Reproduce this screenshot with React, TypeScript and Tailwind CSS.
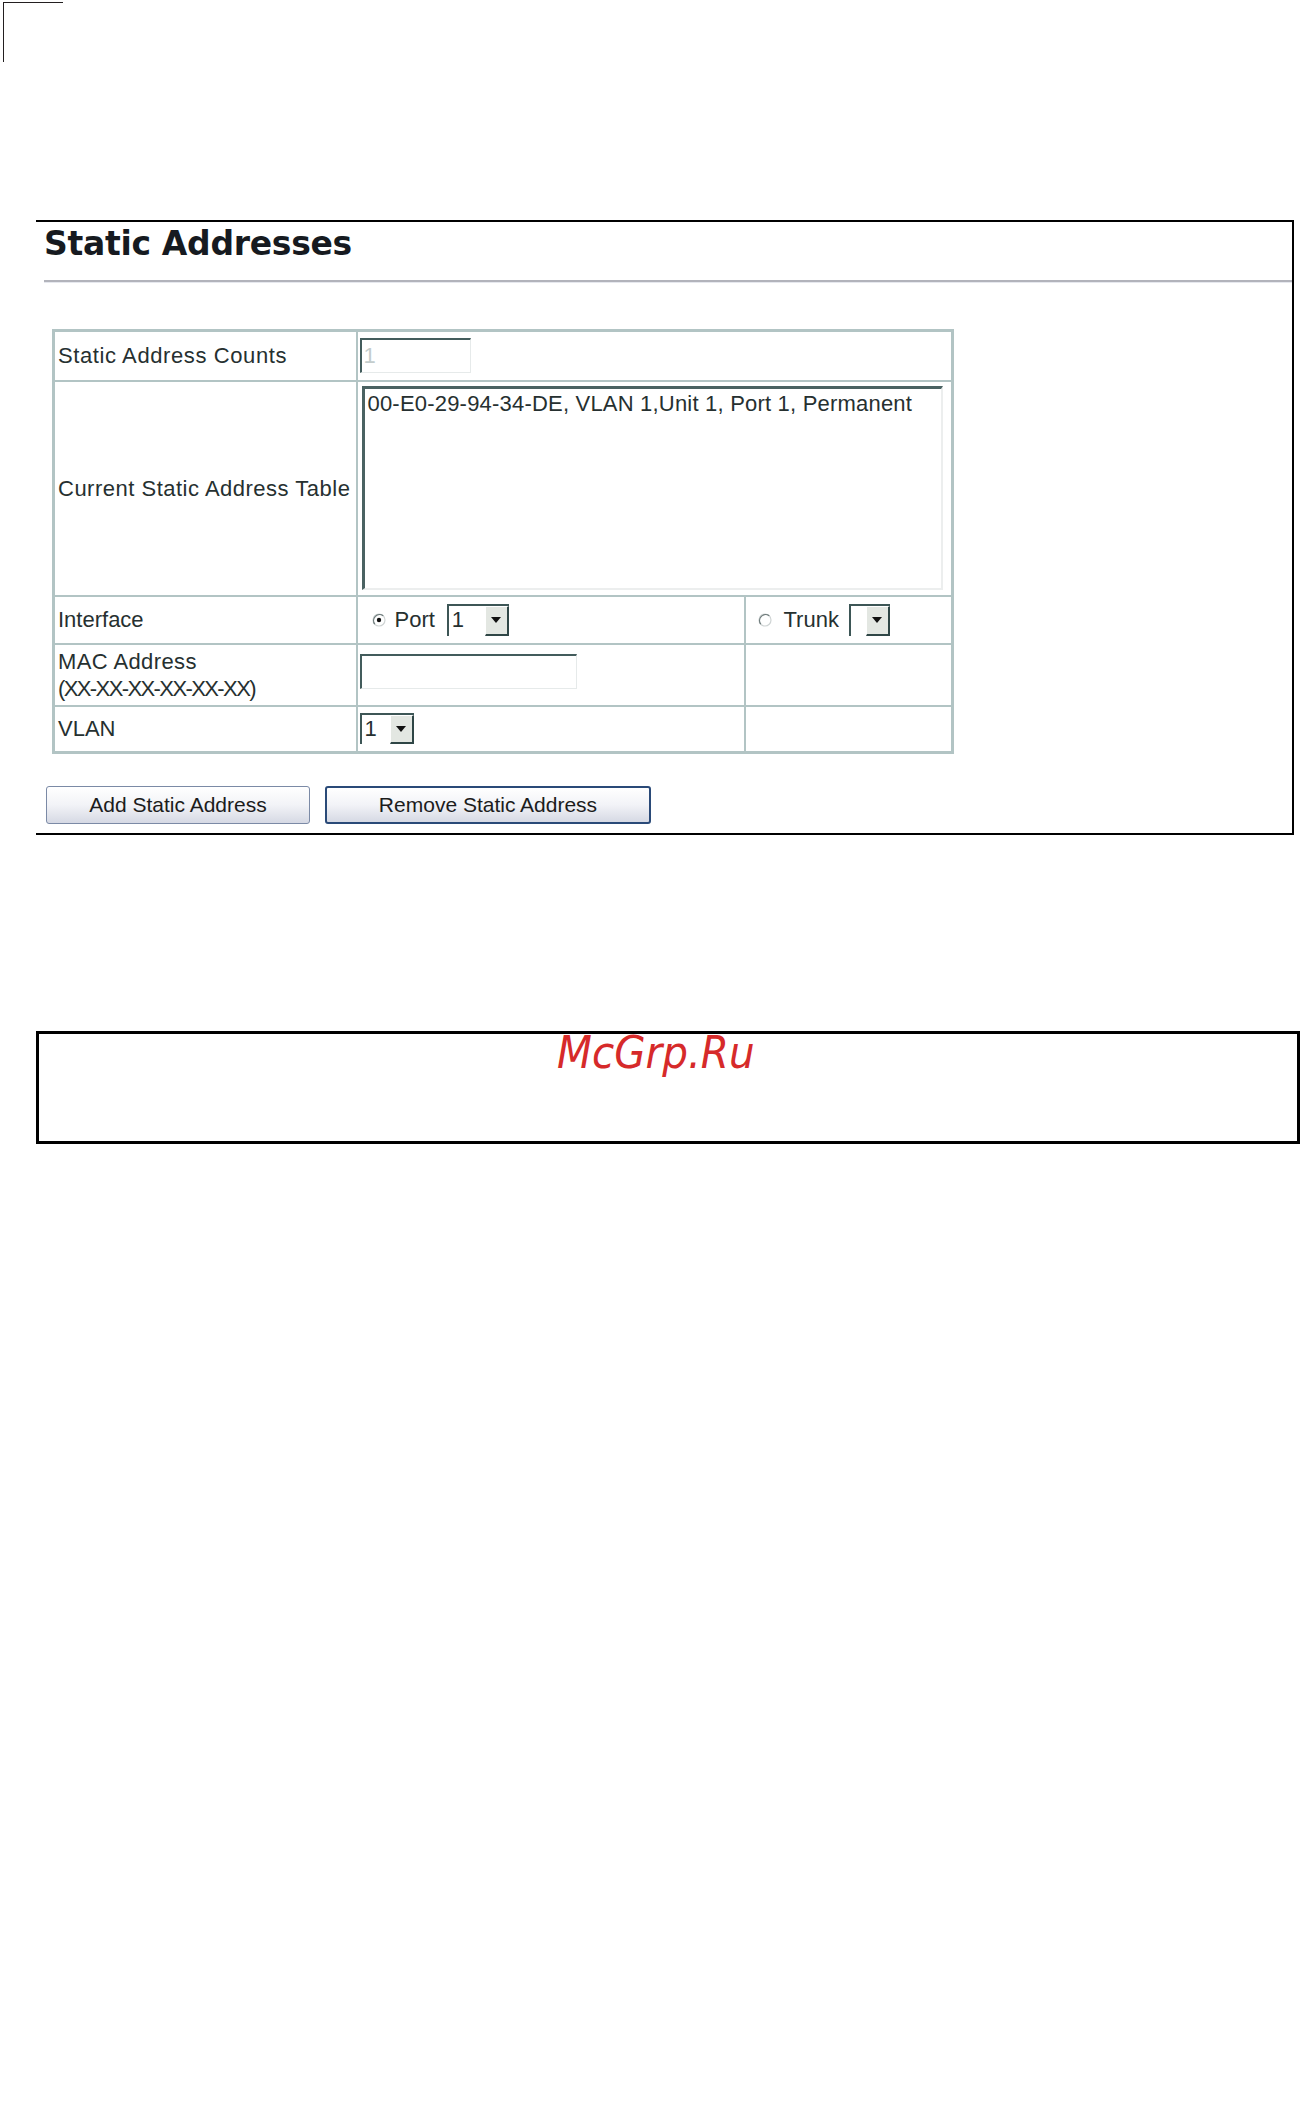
import React from 'react';

const Radio: React.FC<{ checked?: boolean }> = ({ checked }) => (
  <svg width="14" height="14" viewBox="0 0 14 14" className="shrink-0">
    <circle cx="7" cy="7" r="6" fill="#ffffff" stroke="#cfd4d4" strokeWidth="1.2" />
    <path d="M2.8 11.2 A6 6 0 0 1 11.2 2.8" fill="none" stroke="#6f7c7c" strokeWidth="1.3" />
    {checked && <circle cx="7" cy="7" r="2.2" fill="#111" />}
  </svg>
);

const Select: React.FC<{ value?: string; className: string }> = ({ value, className }) => (
  <div className={`flex bg-white border-l-2 border-t-2 border-[#3d5656] ${className}`}>
    <div className="flex-1 pl-[3px] leading-[28px]">{value}</div>
    <div className="w-[24px] bg-[#e3e7e2] border-r-2 border-b-2 border-[#2f4646] border-l border-t border-l-white border-t-white flex items-center justify-center">
      <svg width="10" height="6" viewBox="0 0 10 6">
        <polygon points="0,0 10,0 5,6" fill="#111" />
      </svg>
    </div>
  </div>
);

export default function App() {
  return (
    <div className="w-[1300px] h-[2107px] bg-white overflow-hidden font-['Liberation_Sans',Arial,sans-serif]">
      {/* crop mark */}
      <div className="mt-[2px] ml-[3px] w-[60px] h-[60px] border-l border-t border-[#231f20]" />

      {/* Panel */}
      <div className="mt-[158px] ml-[36px] w-[1258px] h-[615px] border-t-2 border-r-2 border-b-2 border-black">
        <h1 className="pt-[3px] pl-[8px] text-[33px] leading-[38px] font-bold text-[#161a20] font-['DejaVu_Sans',sans-serif] tracking-[-0.3px]">
          Static Addresses
        </h1>
        <div className="mt-[17px] ml-[8px] h-[2px] bg-[#b2b3bb]" />
        <div className="ml-[8px] h-px bg-[#e6e8ee]" />

        <table className="mt-[46px] ml-[16px] w-[899px] table-fixed border-collapse border-[3px] border-[#b2c4c4] text-[22px] text-[#263030]">
          <colgroup>
            <col className="w-[303px]" />
            <col className="w-[388px]" />
            <col className="w-[208px]" />
          </colgroup>
          <tbody>
            <tr className="h-[50px]">
              <td className="border-2 border-[#b2c4c4] pl-[3px] align-middle whitespace-nowrap tracking-[0.6px]">Static Address Counts</td>
              <td colSpan={2} className="border-2 border-[#b2c4c4] pl-[2px] align-middle">
                <div className="w-[111px] h-[35px] border-t-2 border-l-2 border-[#435c5c] border-r border-b border-r-[#e6eaea] border-b-[#e6eaea] pl-[2px] text-[#c3cccc] leading-[31px]">
                  1
                </div>
              </td>
            </tr>
            <tr className="h-[215px]">
              <td className="border-2 border-[#b2c4c4] pl-[3px] align-middle whitespace-nowrap tracking-[0.5px]">Current Static Address Table</td>
              <td colSpan={2} className="border-2 border-[#b2c4c4] pl-[4px] align-middle">
                <div className="w-[581px] h-[204px] border-t-[3px] border-l-[3px] border-[#4a6262] border-r-2 border-b-2 border-r-[#eceeee] border-b-[#eceeee] pl-[3px] pt-[2px] leading-[26px] whitespace-nowrap tracking-[0.2px]">
                  00-E0-29-94-34-DE, VLAN 1,Unit 1, Port 1, Permanent
                </div>
              </td>
            </tr>
            <tr className="h-[48px]">
              <td className="border-2 border-[#b2c4c4] pl-[3px] align-middle">Interface</td>
              <td className="border-2 border-[#b2c4c4] pl-[14px] align-middle">
                <div className="flex items-center">
                  <Radio checked />
                  <span className="ml-[9px]">Port</span>
                  <Select value="1" className="ml-[12px] w-[62px] h-[32px]" />
                </div>
              </td>
              <td className="border-2 border-[#b2c4c4] pl-[12px] align-middle">
                <div className="flex items-center">
                  <Radio />
                  <span className="ml-[12px]">Trunk</span>
                  <Select className="ml-[10px] w-[41px] h-[32px]" />
                </div>
              </td>
            </tr>
            <tr className="h-[62px]">
              <td className="border-2 border-[#b2c4c4] pl-[3px] align-middle leading-[27px]">
                <div className="tracking-[0.4px]">MAC Address</div>
                <div className="tracking-[-1.6px] whitespace-nowrap">(XX-XX-XX-XX-XX-XX)</div>
              </td>
              <td className="border-2 border-[#b2c4c4] pl-[2px] align-middle">
                <div className="w-[217px] h-[35px] -mt-[6px] border-t-2 border-l-2 border-[#435c5c] border-r border-b border-r-[#e6eaea] border-b-[#e6eaea]" />
              </td>
              <td className="border-2 border-[#b2c4c4]" />
            </tr>
            <tr className="h-[47px]">
              <td className="border-2 border-[#b2c4c4] pl-[3px] align-middle">VLAN</td>
              <td className="border-2 border-[#b2c4c4] pl-[2px] align-middle">
                <Select value="1" className="w-[54px] h-[31px]" />
              </td>
              <td className="border-2 border-[#b2c4c4]" />
            </tr>
          </tbody>
        </table>

        <div className="mt-[32px] ml-[10px] flex gap-[15px] text-[21px] text-[#1c1c1c]">
          <button className="w-[264px] h-[38px] rounded-[3px] border border-[#7b8aa6] bg-gradient-to-b from-white via-[#f2f3f7] to-[#d6d9e4]">
            Add Static Address
          </button>
          <button className="w-[326px] h-[38px] rounded-[3px] border-2 border-[#2a4a78] bg-gradient-to-b from-white via-[#f2f3f7] to-[#d6d9e4]">
            Remove Static Address
          </button>
        </div>
      </div>

      {/* Watermark box */}
      <div className="mt-[196px] ml-[36px] w-[1264px] h-[113px] border-[3px] border-black">
        <div className="-mt-[3px] pl-[518px] text-[45px] leading-[44px] italic text-[#d62a2a] font-['DejaVu_Sans_Condensed','DejaVu_Sans',sans-serif]">
          McGrp.Ru
        </div>
      </div>
    </div>
  );
}
